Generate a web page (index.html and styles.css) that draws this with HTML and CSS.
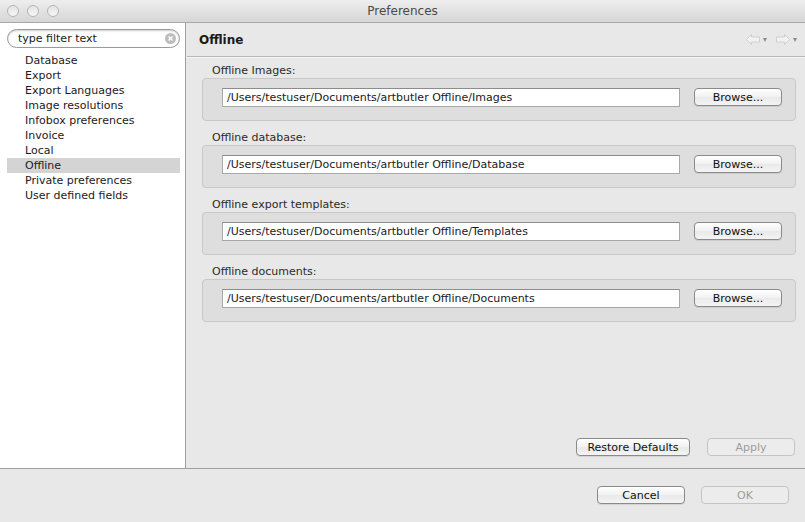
FILE: index.html
```html
<!DOCTYPE html>
<html lang="en">
<head>
  <meta charset="UTF-8">
  <title>Preferences</title>
  <link rel="stylesheet" href="styles.css">
</head>
<body>
  <div class="window">
    <div class="titlebar">
      <div class="lights">
        <span class="light"></span>
        <span class="light"></span>
        <span class="light"></span>
      </div>
      <div class="title">Preferences</div>
    </div>

    <div class="content">
      <div class="sidebar">
        <div class="search">
          <span class="search-text">type filter text</span>
          <span class="clear">
            <svg width="11" height="11" viewBox="0 0 11 11">
              <circle cx="5.5" cy="5.5" r="5.5" fill="#bdbdbd"/>
              <path d="M3.5 3.5 L7.5 7.5 M7.5 3.5 L3.5 7.5" stroke="#fff" stroke-width="1.4"/>
            </svg>
          </span>
        </div>
        <ul class="tree">
          <li>Database</li>
          <li>Export</li>
          <li>Export Languages</li>
          <li>Image resolutions</li>
          <li>Infobox preferences</li>
          <li>Invoice</li>
          <li>Local</li>
          <li class="selected">Offline</li>
          <li>Private preferences</li>
          <li>User defined fields</li>
        </ul>
      </div>

      <div class="main">
        <div class="header">
          <h1>Offline</h1>
          <div class="nav">
            <svg width="14" height="11" viewBox="0 0 14 11">
              <path d="M0.5 5.5 L5.5 0.5 L5.5 3 L13.5 3 L13.5 8 L5.5 8 L5.5 10.5 Z" fill="#f2f2f2" stroke="#cfcfcf"/>
            </svg>
            <span class="drop"></span>
            <svg width="14" height="11" viewBox="0 0 14 11">
              <path d="M13.5 5.5 L8.5 0.5 L8.5 3 L0.5 3 L0.5 8 L8.5 8 L8.5 10.5 Z" fill="#f2f2f2" stroke="#cfcfcf"/>
            </svg>
            <span class="drop"></span>
          </div>
        </div>

        <div class="groups">
          <div class="group">
            <div class="group-label">Offline Images:</div>
            <div class="group-box">
              <div class="field">/Users/testuser/Documents/artbutler Offline/Images</div>
              <button class="btn">Browse...</button>
            </div>
          </div>
          <div class="group">
            <div class="group-label">Offline database:</div>
            <div class="group-box">
              <div class="field">/Users/testuser/Documents/artbutler Offline/Database</div>
              <button class="btn">Browse...</button>
            </div>
          </div>
          <div class="group">
            <div class="group-label">Offline export templates:</div>
            <div class="group-box">
              <div class="field">/Users/testuser/Documents/artbutler Offline/Templates</div>
              <button class="btn">Browse...</button>
            </div>
          </div>
          <div class="group">
            <div class="group-label">Offline documents:</div>
            <div class="group-box">
              <div class="field">/Users/testuser/Documents/artbutler Offline/Documents</div>
              <button class="btn">Browse...</button>
            </div>
          </div>
        </div>

        <div class="page-buttons">
          <button class="btn btn-restore">Restore Defaults</button>
          <button class="btn btn-apply disabled">Apply</button>
        </div>
      </div>
    </div>

    <div class="footer">
      <button class="btn btn-cancel">Cancel</button>
      <button class="btn btn-ok disabled">OK</button>
    </div>
  </div>
</body>
</html>
```

FILE: styles.css
```css
body {
  margin: 0;
  font-family: "DejaVu Sans", sans-serif;
  font-size: 11px;
  color: #1a1a1a;
  background-color: #e8e8e8;
}

.window {
  width: 805px;
  height: 522px;
  display: flex;
  flex-direction: column;
  overflow: hidden;
}

.titlebar {
  height: 22px;
  background: linear-gradient(#eeeeee, #d6d6d6);
  border-bottom: 1px solid #a8a8a8;
  display: flex;
  align-items: center;
  position: relative;
}

.lights {
  display: flex;
  gap: 8px;
  padding-left: 7px;
}

.light {
  width: 10px;
  height: 10px;
  border-radius: 50%;
  border: 1px solid #b4b4b4;
  background: linear-gradient(#e4e4e4, #f6f6f6);
}

.title {
  position: absolute;
  left: 0;
  right: 0;
  text-align: center;
  font-family: "DejaVu Sans", sans-serif;
  font-size: 12px;
  color: #4a4a4a;
}

.content {
  display: flex;
  height: 445px;
  border-bottom: 1px solid #a0a0a0;
}

.sidebar {
  width: 186px;
  background-color: white;
  border-right: 1px solid #a0a0a0;
  padding-top: 6px;
  box-sizing: border-box;
}

.search {
  margin: 0 5px 0 7px;
  height: 19px;
  border: 1px solid #9a9a9a;
  border-radius: 10px;
  box-shadow: inset 0 1px 2px rgba(0,0,0,0.2);
  display: flex;
  align-items: center;
  justify-content: space-between;
  padding: 0 3px 0 10px;
  box-sizing: border-box;
  font-size: 11px;
}

.clear {
  display: flex;
}

.tree {
  list-style: none;
  margin: 5px 0 0 7px;
  padding: 0;
  width: 173px;
}

.tree li {
  height: 15px;
  line-height: 15px;
  padding-left: 18px;
}

.tree li.selected {
  background-color: #d4d4d4;
}

.main {
  flex: 1;
  margin-left: 1px;
  display: flex;
  flex-direction: column;
}

.header {
  height: 33px;
  border-bottom: 1px solid #b8b8b8;
  box-shadow: 0 1px 0 #f6f6f6;
  display: flex;
  align-items: center;
  justify-content: space-between;
  padding: 0 8px 0 12px;
}

.header h1 {
  margin: 0;
  font-size: 12px;
  font-weight: bold;
}

.nav {
  display: flex;
  align-items: center;
  gap: 3px;
}

.drop {
  width: 0;
  height: 0;
  border-left: 2.5px solid transparent;
  border-right: 2.5px solid transparent;
  border-top: 4px solid #888;
  margin-right: 6px;
}

.nav .drop:last-child {
  margin-right: 0;
}

.groups {
  padding: 7px 9px 0 15px;
}

.group {
  margin-bottom: 10px;
}

.group-label {
  height: 14px;
  line-height: 13px;
  padding-left: 10px;
  color: #2a2a2a;
}

.group-box {
  height: 43px;
  box-sizing: border-box;
  background-color: #dedede;
  border: 1px solid #c8c8c8;
  border-radius: 4px;
  display: flex;
  align-items: flex-start;
  gap: 14px;
  padding: 9px 13px 0 19px;
}

.field {
  flex: 1;
  height: 19px;
  box-sizing: border-box;
  background: white;
  border: 1px solid #a8a8a8;
  border-top-color: #8c8c8c;
  padding-left: 4px;
  line-height: 17px;
  white-space: nowrap;
  overflow: hidden;
}

.btn {
  font-family: "DejaVu Sans", sans-serif;
  font-size: 11px;
  color: #111;
  height: 18px;
  padding: 0;
  border: 1px solid #8a8a8a;
  border-radius: 4px;
  background: linear-gradient(#ffffff, #f1f1f1 50%, #e9e9e9 51%, #f4f4f4);
  box-shadow: 0 1px 0 rgba(0,0,0,0.08);
}

.group-box .btn {
  width: 88px;
}

.btn.disabled {
  color: #9c9c9c;
  border-color: #c4c4c4;
  background: #ececec;
  box-shadow: none;
}

.page-buttons {
  margin-top: auto;
  display: flex;
  justify-content: flex-end;
  gap: 17px;
  padding: 0 10px 12px 0;
}

.btn-restore {
  width: 114px;
}

.btn-apply {
  width: 88px;
}

.footer {
  flex: 1;
  display: flex;
  justify-content: flex-end;
  align-items: flex-start;
  gap: 16px;
  padding: 17px 16px 0 0;
}

.btn-cancel,
.btn-ok {
  width: 88px;
}
```
